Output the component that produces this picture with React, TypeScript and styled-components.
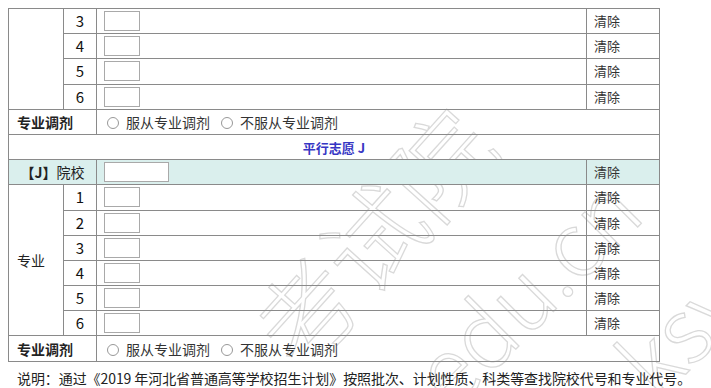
import React from "react";
import styled, { createGlobalStyle } from "styled-components";

const Global = createGlobalStyle`
  html, body { margin: 0; padding: 0; background: #fff; }
  body {
    padding: 8px;
    font-family: "Microsoft YaHei", "Noto Sans CJK SC", "Noto Sans", sans-serif;
    color: #222;
    overflow: hidden;
  }
`;

const Page = styled.div`
  position: relative;
  width: 695px;
`;

const Watermark = styled.div<{ $x: number; $y: number; $size: number; $rot: number }>`
  position: absolute;
  left: ${(p) => p.$x}px;
  top: ${(p) => p.$y}px;
  font-size: ${(p) => p.$size}px;
  font-family: "Noto Sans CJK SC", "Liberation Serif", serif;
  font-weight: 300;
  color: transparent;
  -webkit-text-stroke: 1.3px rgba(208, 208, 208, 0.8);
  transform: rotate(${(p) => p.$rot}deg);
  transform-origin: left top;
  white-space: nowrap;
  pointer-events: none;
  z-index: 0;
  line-height: 1;
`;

const Table = styled.table`
  position: relative;
  z-index: 1;
  border-collapse: collapse;
  width: 651px;
  table-layout: fixed;
  font-size: 14px;
`;

const Row = styled.tr<{ $tint?: boolean }>`
  height: 25.2px;
  background: ${(p) => (p.$tint ? "#daefed" : "transparent")};
`;

const Cell = styled.td<{ $align?: string; $bold?: boolean; $pad?: number }>`
  border: 1px solid #8a8a8a;
  padding: 0 ${(p) => p.$pad ?? 4}px;
  text-align: ${(p) => p.$align ?? "left"};
  font-weight: ${(p) => (p.$bold ? 700 : 400)};
  vertical-align: middle;
  white-space: nowrap;
  line-height: 18px;
`;

const Num = styled(Cell)`
  text-align: center;
  font-size: 15px;
  color: #111;
`;

const ClearCell = styled(Cell)`
  font-size: 13px;
  color: #333;
  padding-left: 7px;
`;

const Title = styled.span`
  color: #3636c4;
  font-weight: 700;
  font-size: 13px;
`;

const Strong = styled.b`
  font-weight: 700;
`;

const Box = styled.input<{ $w: number }>`
  box-sizing: border-box;
  display: block;
  width: ${(p) => p.$w}px;
  height: 20px;
  margin: 0 0 0 3px;
  border: 1px solid #a9a9a9;
  background: #fff;
  padding: 0;
`;

const Radio = styled.input`
  width: 12px;
  height: 12px;
  margin: 0 7px 0 10px;
  vertical-align: -1px;
  accent-color: #aaa;
  opacity: 0.75;
`;

const RadioLabel = styled.span`
  font-size: 14px;
  color: #333;
  margin-right: 1px;
`;

const Note = styled.p`
  position: relative;
  z-index: 1;
  margin: 7px 0 0 9px;
  font-size: 14px;
  line-height: 18px;
  color: #222;
  white-space: nowrap;
  letter-spacing: -0.08px;
`;

const Adjust = ({ name }: { name: string }) => (
  <Row>
    <Cell colSpan={2} $bold $pad={8}>专业调剂</Cell>
    <Cell colSpan={2} $pad={0}>
      <Radio type="radio" name={name} />
      <RadioLabel>服从专业调剂</RadioLabel>
      <Radio type="radio" name={name} />
      <RadioLabel>不服从专业调剂</RadioLabel>
    </Cell>
  </Row>
);

const MajorRow = ({ n, lead }: { n: number; lead?: React.ReactNode }) => (
  <Row>
    {lead}
    <Num>{n}</Num>
    <Cell $pad={4}>
      <Box $w={36} />
    </Cell>
    <ClearCell>清除</ClearCell>
  </Row>
);

export default function App() {
  return (
    <Page>
      <Global />
      <Watermark $x={225} $y={305} $size={100} $rot={-48}>考试院</Watermark>
      <Watermark $x={385} $y={345} $size={90} $rot={-45}>edu.cn</Watermark>
      <Watermark $x={590} $y={335} $size={90} $rot={-45}>ksy</Watermark>
      <Table>
        <colgroup>
          <col style={{ width: 55 }} />
          <col style={{ width: 33 }} />
          <col style={{ width: 490 }} />
          <col style={{ width: 73 }} />
        </colgroup>
        <tbody>
          <MajorRow n={3} lead={<Cell rowSpan={4} />} />
          <MajorRow n={4} />
          <MajorRow n={5} />
          <MajorRow n={6} />
          <Adjust name="i" />
          <Row>
            <Cell colSpan={4} $align="center">
              <Title>平行志愿 J</Title>
            </Cell>
          </Row>
          <Row $tint>
            <Cell colSpan={2} $align="center">
              <Strong>【J】</Strong>院校
            </Cell>
            <Cell $pad={4}>
              <Box $w={65} />
            </Cell>
            <ClearCell>清除</ClearCell>
          </Row>
          <MajorRow n={1} lead={<Cell rowSpan={6} $pad={8}>专业</Cell>} />
          <MajorRow n={2} />
          <MajorRow n={3} />
          <MajorRow n={4} />
          <MajorRow n={5} />
          <MajorRow n={6} />
          <Adjust name="j" />
        </tbody>
      </Table>
      <Note>说明：通过《2019 年河北省普通高等学校招生计划》按照批次、计划性质、科类等查找院校代号和专业代号。</Note>
    </Page>
  );
}
